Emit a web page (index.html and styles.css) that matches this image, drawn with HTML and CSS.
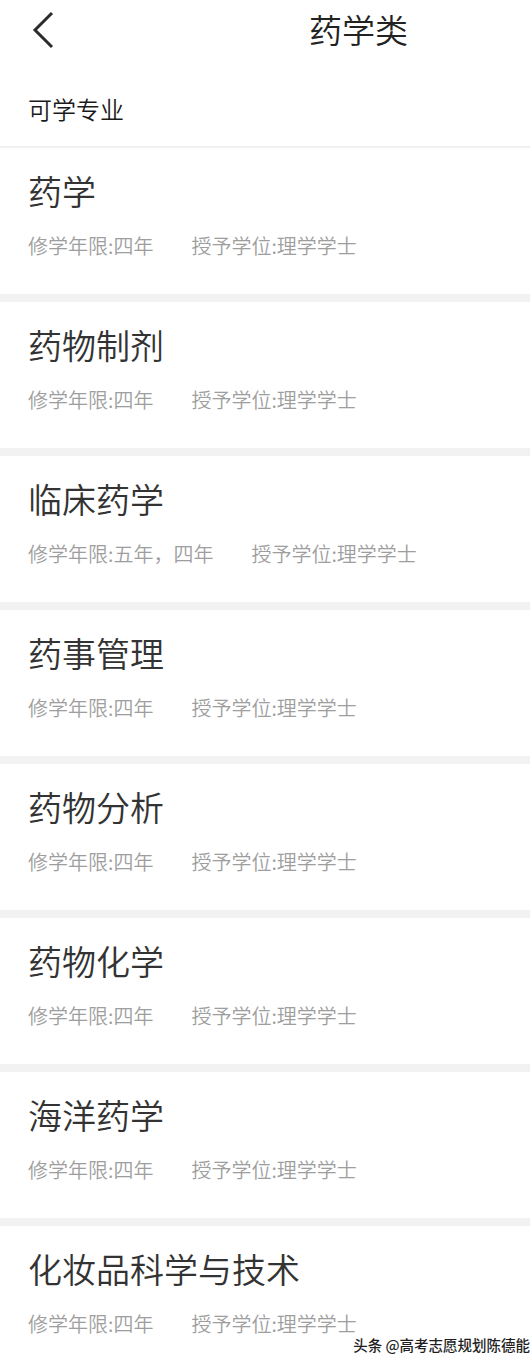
FILE: index.html
```html
<!DOCTYPE html>
<html lang="zh-CN">
<head>
<meta charset="utf-8">
<title>药学类</title>
<link rel="stylesheet" href="styles.css">
</head>
<body>
<div class="page">
  <header class="topbar">
    <svg class="back" width="26" height="40" viewBox="0 0 26 40" aria-hidden="true">
      <path d="M22 4 L5 21 L22 38" fill="none" stroke="#2b2b2b" stroke-width="3"/>
    </svg>
    <h1 class="page-title">药学类</h1>
  </header>
  <div class="section-label">可学专业</div>
  <ul class="majors">
    <li class="major"><div class="major-name">药学</div><div class="major-meta"><span class="years">修学年限:四年</span><span>授予学位:理学学士</span></div></li>
    <li class="major"><div class="major-name">药物制剂</div><div class="major-meta"><span class="years">修学年限:四年</span><span>授予学位:理学学士</span></div></li>
    <li class="major"><div class="major-name">临床药学</div><div class="major-meta"><span class="years">修学年限:五年，四年</span><span>授予学位:理学学士</span></div></li>
    <li class="major"><div class="major-name">药事管理</div><div class="major-meta"><span class="years">修学年限:四年</span><span>授予学位:理学学士</span></div></li>
    <li class="major"><div class="major-name">药物分析</div><div class="major-meta"><span class="years">修学年限:四年</span><span>授予学位:理学学士</span></div></li>
    <li class="major"><div class="major-name">药物化学</div><div class="major-meta"><span class="years">修学年限:四年</span><span>授予学位:理学学士</span></div></li>
    <li class="major"><div class="major-name">海洋药学</div><div class="major-meta"><span class="years">修学年限:四年</span><span>授予学位:理学学士</span></div></li>
    <li class="major"><div class="major-name">化妆品科学与技术</div><div class="major-meta"><span class="years">修学年限:四年</span><span>授予学位:理学学士</span></div></li>
  </ul>
  <div class="watermark">头条 @高考志愿规划陈德能</div>
</div>
</body>
</html>
```

FILE: styles.css
```css
* { box-sizing: border-box; }
html, body {
  margin: 0;
  padding: 0;
  background: #ffffff;
}
body {
  font-family: "Noto Sans CJK SC", "Noto Sans", sans-serif;
  color: #333333;
  overflow: hidden;
}
.page {
  position: relative;
  width: 530px;
  height: 1365px;
  overflow: hidden;
}
.topbar {
  height: 58px;
  display: flex;
  align-items: center;
}
.back {
  margin-left: 30px;
  flex: none;
}
.page-title {
  margin: 0 0 0 253px;
  font-size: 33px;
  font-weight: 350;
  line-height: 40px;
  color: #222222;
}
.section-label {
  height: 90px;
  padding-top: 35px;
  padding-left: 28px;
  font-size: 24px;
  font-weight: 350;
  line-height: 32px;
  color: #1a1a1a;
  border-bottom: 2px solid #f0f0f0;
}
.majors {
  list-style: none;
  margin: 0;
  padding: 0;
  background: #f2f2f2;
  display: flex;
  flex-direction: column;
  gap: 8px;
}
.major {
  height: 146px;
  background: #ffffff;
  padding: 23px 0 0 28px;
}
.major-name {
  font-size: 34px;
  font-weight: 350;
  line-height: 40px;
  color: #333333;
}
.major-meta {
  margin-top: 21px;
  font-size: 20px;
  font-weight: 350;
  line-height: 28px;
  color: #9e9e9e;
  display: flex;
  gap: 38px;
}
.watermark {
  position: absolute;
  right: 0;
  bottom: 10px;
  font-size: 14.5px;
  font-weight: 500;
  line-height: 20px;
  color: #1e1e1e;
  text-shadow: 0 0 2px #ffffff;
}
```
